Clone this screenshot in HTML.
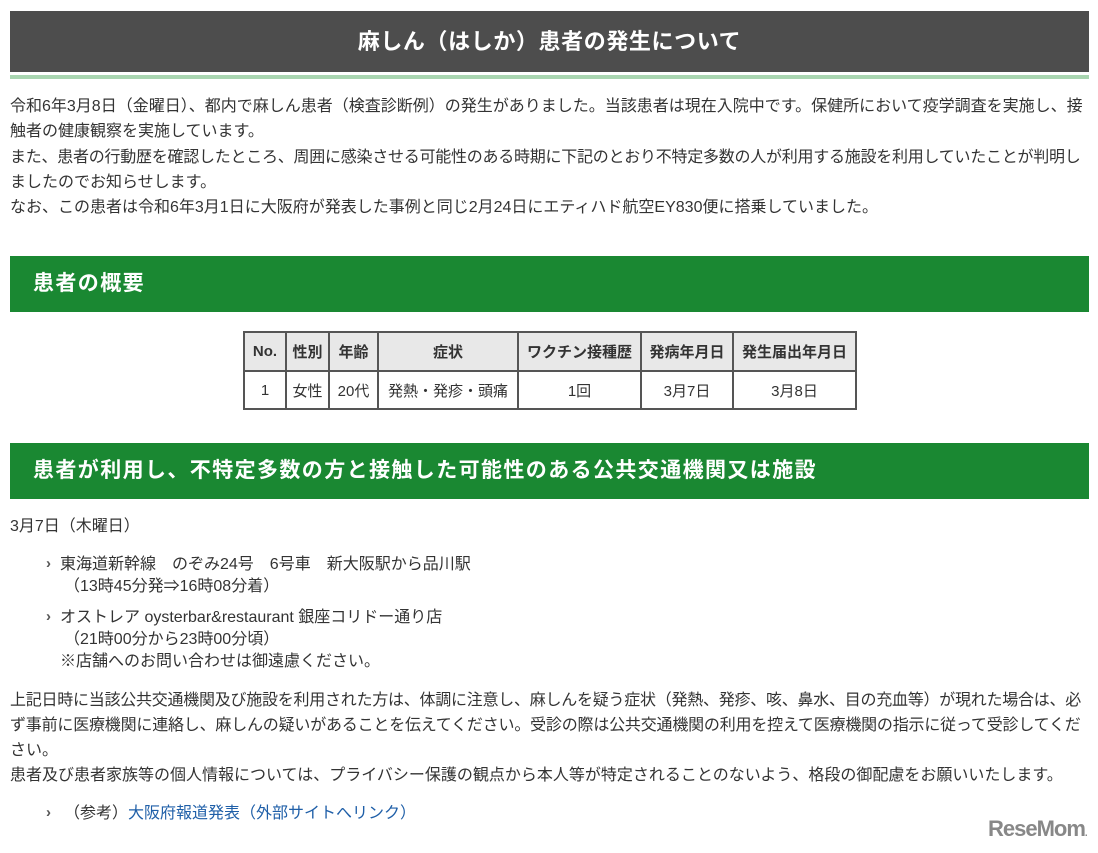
<!DOCTYPE html>
<html><head><meta charset="utf-8"><style>
*{margin:0;padding:0;box-sizing:border-box}
body{width:1098px;height:853px;background:#fff;position:relative;overflow:hidden;font-family:"Liberation Sans","Noto Sans CJK JP",sans-serif;color:#333;font-size:16px}
.l{position:absolute;white-space:nowrap;line-height:24px;height:24px}
.title{position:absolute;left:10px;top:11px;width:1079px;height:61px;background:#4d4d4d;color:#fff;font-weight:bold;font-size:22px;text-align:center;line-height:61px;letter-spacing:.6px}
.gl{position:absolute;left:10px;top:75px;width:1079px;height:4px;background:#a8d5b0}
.h2{position:absolute;left:10px;width:1079px;height:56px;background:#1a8832;color:#fff;font-weight:bold;font-size:21px;line-height:56px;padding-left:23px;letter-spacing:1.4px}
table{position:absolute;left:243px;top:331px;border-collapse:collapse;font-size:15px}
td,th{border:2px solid #555;text-align:center;padding:0 5px;white-space:nowrap}
th{background:#e8e8e8;height:39px;font-weight:bold}
td{height:38px}
.ar{position:absolute;color:#555;font-weight:bold;font-size:15px}
a{color:#1f5fa8;text-decoration:none}
.logo{position:absolute;left:988px;top:816px;font-weight:bold;font-size:22px;color:#888;letter-spacing:-1px}
.t{letter-spacing:-0.25px}
</style></head><body>
<div class="title">麻しん（はしか）患者の発生について</div>
<div class="gl"></div>
<div class="l" style="left:10px;top:95px">令和6年3月8日（金曜日）、都内で麻しん患者（検査診断例）の発生がありました。当該患者は現在入院中です。保健所において疫学調査を実施し、接</div>
<div class="l" style="left:10px;top:120px">触者の健康観察を実施しています。</div>
<div class="l t" style="left:10px;top:146px">また、患者の行動歴を確認したところ、周囲に感染させる可能性のある時期に下記のとおり不特定多数の人が利用する施設を利用していたことが判明し</div>
<div class="l" style="left:10px;top:171px">ましたのでお知らせします。</div>
<div class="l" style="left:10px;top:196px">なお、この患者は令和6年3月1日に大阪府が発表した事例と同じ2月24日にエティハド航空EY830便に搭乗していました。</div>
<div class="h2" style="top:256px">患者の概要</div>
<table>
<tr><th style="width:42px">No.</th><th style="width:43px">性別</th><th style="width:49px">年齢</th><th style="width:140px">症状</th><th style="width:123px">ワクチン接種歴</th><th style="width:92px">発病年月日</th><th style="width:123px">発生届出年月日</th></tr>
<tr><td>1</td><td>女性</td><td>20代</td><td>発熱・発疹・頭痛</td><td>1回</td><td>3月7日</td><td>3月8日</td></tr>
</table>
<div class="h2" style="top:443px">患者が利用し、不特定多数の方と接触した可能性のある公共交通機関又は施設</div>
<div class="l" style="left:10px;top:515px">3月7日（木曜日）</div>
<div class="ar" style="left:46px;top:555px">›</div>
<div class="l" style="left:60px;top:553px">東海道新幹線　のぞみ24号　6号車　新大阪駅から品川駅</div>
<div class="l" style="left:64px;top:575px">（13時45分発⇒16時08分着）</div>
<div class="ar" style="left:46px;top:608px">›</div>
<div class="l" style="left:60px;top:606px">オストレア oysterbar&amp;restaurant 銀座コリドー通り店</div>
<div class="l" style="left:64px;top:628px">（21時00分から23時00分頃）</div>
<div class="l" style="left:60px;top:650px">※店舗へのお問い合わせは御遠慮ください。</div>
<div class="l t" style="left:10px;top:689px">上記日時に当該公共交通機関及び施設を利用された方は、体調に注意し、麻しんを疑う症状（発熱、発疹、咳、鼻水、目の充血等）が現れた場合は、必</div>
<div class="l" style="left:10px;top:714px;letter-spacing:-0.2px">ず事前に医療機関に連絡し、麻しんの疑いがあることを伝えてください。受診の際は公共交通機関の利用を控えて医療機関の指示に従って受診してくだ</div>
<div class="l" style="left:10px;top:739px">さい。</div>
<div class="l" style="left:10px;top:764px">患者及び患者家族等の個人情報については、プライバシー保護の観点から本人等が特定されることのないよう、格段の御配慮をお願いいたします。</div>
<div class="ar" style="left:46px;top:804px">›</div>
<div class="l" style="left:64px;top:802px">（参考）<a>大阪府報道発表（外部サイトへリンク）</a></div>
<div class="logo">ReseMom<span style="font-size:10px">.</span></div>
</body></html>
